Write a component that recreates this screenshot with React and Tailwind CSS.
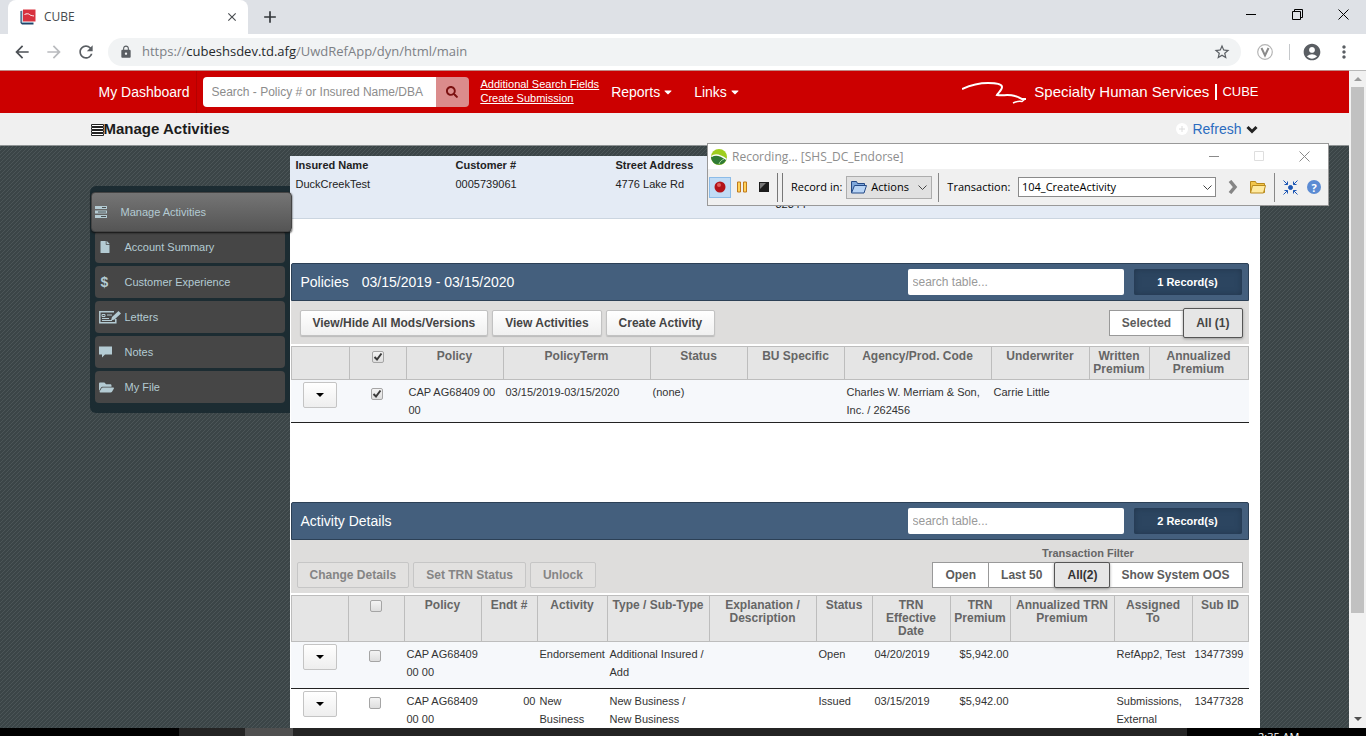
import React from "react";
import { MdArrowBack, MdArrowForward, MdRefresh, MdLock, MdStarBorder, MdAccountCircle, MdMoreVert, MdClose, MdAdd } from "react-icons/md";
import { FaSearch, FaCaretDown, FaFile, FaFolderOpen } from "react-icons/fa";

const stripes = "bg-[linear-gradient(135deg,#4b5557_0%,#4b5557_13%,#3b4547_13%,#3b4547_50%,#4b5557_50%,#4b5557_63%,#3b4547_63%,#3b4547_100%)] bg-size-[4px_4px]";

function BrowserChrome() {
  return (
    <div className="shrink-0 font-['Open_Sans',sans-serif]">
      <div className="flex h-[34px] bg-[#dee1e6] pl-2">
        <div className="flex w-60 items-center rounded-t-lg bg-white pl-3 pr-2 text-[12px] text-[#45494d]">
          <svg className="mr-2 size-4" viewBox="0 0 16 16" aria-hidden="true">
            <path d="M.5 2v12l1.500 1.500h11.500V14H2V2z" fill="#1f4468" />
            <path d="M2 1.500v12h11.500" fill="none" stroke="#8fb0c6" />
            <path d="M3 .5h12.500V12.500H3z" fill="#d8323f" />
            <path d="M4.500 5.500c2-1 4-1 5 0s2 1 4.500 1.500" fill="none" stroke="#fff" />
          </svg>
          <span className="grow">CUBE</span>
          <button type="button" aria-label="Close tab" className="grid size-4 place-items-center text-[#4a4e52]"><MdClose size={14} /></button>
        </div>
        <button type="button" aria-label="New tab" className="ml-3 grid w-5 place-items-center text-[#33373b]"><MdAdd size={20} /></button>
        <div className="ml-auto flex w-[138px] items-center justify-around pb-[6px] text-black">
          <button type="button" aria-label="Minimize"><svg width="11" height="11" viewBox="0 0 11 11"><path d="M0 5.500h10" stroke="currentColor" /></svg></button>
          <button type="button" aria-label="Restore"><svg width="11" height="11" viewBox="0 0 11 11" fill="none" stroke="currentColor"><path d="M.5 2.500h8v8h-8zM2.500 2.500v-2h8v8h-2" /></svg></button>
          <button type="button" aria-label="Close window"><svg width="11" height="11" viewBox="0 0 11 11"><path d="M.5.5l10 10M10.500.5l-10 10" stroke="currentColor" /></svg></button>
        </div>
      </div>
      <div className="flex h-9 items-center bg-white pl-3 pr-3 text-[#5a5e63]">
        <button type="button" aria-label="Back" className="grid w-5 place-items-center text-[#4c5055]"><MdArrowBack size={20} /></button>
        <button type="button" aria-label="Forward" className="ml-3 grid w-5 place-items-center text-[#b9bbbe]"><MdArrowForward size={20} /></button>
        <button type="button" aria-label="Reload" className="ml-3 grid w-5 place-items-center"><MdRefresh size={20} /></button>
        <div className="ml-3 flex h-7 grow items-center rounded-full bg-[#f1f3f4] px-[10px]">
          <MdLock size={14} className="ml-px" />
          <div className="ml-[9px] grow text-[13px] text-[#7c8085]">https://<span className="text-[#25282b]">cubeshsdev.td.afg</span>/UwdRefApp/dyn/html/main</div>
          <button type="button" aria-label="Bookmark"><MdStarBorder size={18} /></button>
        </div>
        <svg className="ml-4 size-4" viewBox="0 0 16 16" fill="none" aria-hidden="true">
          <circle cx="8" cy="8" r="7.300" stroke="#b5b5b5" strokeWidth="1.200" />
          <path d="M4.500 4L8 11.500 11.500 4" stroke="#8b8b8b" strokeWidth="2" />
        </svg>
        <div className="ml-4 mr-3 h-4 w-px bg-[#c5c8cb]" />
        <button type="button" aria-label="Profile"><MdAccountCircle size={20} /></button>
        <button type="button" aria-label="Browser menu" className="ml-3"><MdMoreVert size={20} /></button>
      </div>
    </div>
  );
}

function NavBar() {
  return (
    <header className="h-[43px] shrink-0 border-t border-[#c08a86] bg-[#c00] text-white">
      <div className="mx-auto flex h-full w-[1170px] max-w-full items-center">
        <a href="#dashboard" className="flex h-full w-[107px] items-center border-r border-[#b50000] pl-[9px] text-[14px] whitespace-nowrap">My Dashboard</a>
        <form className="ml-[6px] flex h-[30px] w-[266px]">
          <input type="text" aria-label="Search" placeholder="Search - Policy # or Insured Name/DBA" className="w-[233px] rounded-l-sm bg-white px-[9px] text-[12px] text-[#555] placeholder:text-[#8c8c8c]" />
          <button type="button" aria-label="Run search" className="grid w-[33px] place-items-center rounded-r-sm bg-[#db8c8c] text-[#7b1010]"><FaSearch size={12} /></button>
        </form>
        <div className="ml-3 flex flex-col pb-[2px] text-[11px] leading-[14px] underline">
          <a href="#fields">Additional Search Fields</a>
          <a href="#create">Create Submission</a>
        </div>
        <button type="button" className="ml-3 flex items-center gap-[2px] text-[14px]">Reports <FaCaretDown size={12} /></button>
        <button type="button" className="ml-5 flex items-center gap-[2px] text-[14px]">Links <FaCaretDown size={12} /></button>
        <div className="ml-auto flex items-center">
          <svg className="h-6 w-16" viewBox="0 0 64 24" fill="none" stroke="#fff" aria-hidden="true">
            <path d="M0 9C9 5 16 3 26 3c8 0 14 1 14 4 0 3-4 6-5 8 6 1 11-1 18 1 4 1 4 2 7 3l4 0" strokeWidth="2" />
            <path d="M63 19l-3 2.500c-3-.5-6 0-9 1.500" strokeWidth="1.500" />
          </svg>
          <span className="ml-2 text-[15px]">Specialty Human Services</span>
          <span className="ml-[6px] h-4 w-[2px] bg-white" />
          <span className="ml-[5px] pr-px text-[13px]">CUBE</span>
        </div>
      </div>
    </header>
  );
}

function SubHeader() {
  return (
    <div className="h-[33px] shrink-0 border-b border-[#8e9394] bg-[#f0f0f0]">
      <div className="mx-auto flex h-full w-[1170px] max-w-full items-center">
        <svg className="ml-px mt-[2px] h-3 w-[13px]" viewBox="0 0 13 12" fill="#fff" stroke="#222" aria-hidden="true">
          <path d="M.5 .5h12v2H.5zM.5 3.500h12v2H.5zM.5 6.500h12v2H.5zM.5 9.500h12v2H.5z" />
        </svg>
        <h1 className="text-[15px] font-bold text-[#1c1c1c]">Manage Activities</h1>
        <div className="ml-auto flex items-center pr-[2px] text-[14px]">
          <svg className="mr-1 size-3" viewBox="0 0 12 12" aria-hidden="true"><circle cx="6" cy="6" r="6" fill="#fff" /><path d="M6 3v6M3 6h6" stroke="#dcdcdc" /></svg>
          <a href="#refresh" className="text-[#2b6cbf]">Refresh</a>
          <svg className="ml-1" width="12" height="9" viewBox="0 0 12 9" aria-hidden="true"><path d="M1.500 2L6 6.500 10.500 2" fill="none" stroke="#222" strokeWidth="3" /></svg>
        </div>
      </div>
    </div>
  );
}

function ServerIcon() {
  return (
    <svg width="12" height="12" viewBox="0 0 12 12" aria-hidden="true">
      <path d="M0 0h12v3H0zM0 4.500h12v3H0zM0 9h12v3H0z" fill="#b4cbd3" />
      <path d="M7 1.500h4M3 6h8M6 10.500h5" stroke="#4b5254" />
    </svg>
  );
}
function LetterIcon() {
  return (
    <svg width="22" height="14" viewBox="0 0 22 14" fill="none" stroke="#b4cbd3" aria-hidden="true">
      <path d="M15 1.700H.8v11h16V9" strokeWidth="1.500" />
      <path d="M3 4.500h3v2H3zM3 8.500h7M3 10.500h10M8 5h5" />
      <path d="M12 10.500l1-3.500 6.500-6 2.500 2.500-6.500 6z" fill="#b4cbd3" stroke="none" />
    </svg>
  );
}
function NoteIcon() {
  return (
    <svg width="13" height="12" viewBox="0 0 13 12" aria-hidden="true"><path d="M0 .5h13v8H6L3 11.500v-3H0z" fill="#b4cbd3" /></svg>
  );
}

const menu = [
  { name: "Account Summary", icon: <FaFile size={12} /> },
  { name: "Customer Experience", icon: <span className="pl-[2px] text-[14px] leading-4 font-bold" aria-hidden="true">$</span> },
  { name: "Letters", icon: <LetterIcon /> },
  { name: "Notes", icon: <NoteIcon /> },
  { name: "My File", icon: <FaFolderOpen size={15} /> },
];

function Sidebar() {
  return (
    <nav className="mt-10 w-[200px] shrink-0 self-start rounded-l-md bg-[#1c2c32] pb-[10px] pt-[6px] text-[11px] text-[#b4cbd3]">
      <a href="#manage" className="relative z-10 -mr-[2px] ml-px flex h-10 items-center rounded border border-[#444] bg-linear-to-b from-[#757575] to-[#555] pl-[3px] shadow-[0_1px_2px_#111]">
        <span className="w-[26px]"><ServerIcon /></span>Manage Activities
      </a>
      <ul className="flex flex-col gap-[3px]">
        {menu.map((m) => (
          <li key={m.name} className="ml-[5px] mr-[5px] first:-mt-px">
            <a href="#menu" className="flex h-8 items-center rounded bg-[#464646] pl-1">
              <span className="flex w-[26px] shrink-0 justify-start">{m.icon}</span>{m.name}
            </a>
          </li>
        ))}
      </ul>
    </nav>
  );
}

function Tick({ label, checked = false }) {
  return (
    <span className="inline-grid size-3 align-middle">
      <input type="checkbox" aria-label={label} defaultChecked={checked} className="peer col-start-1 row-start-1 size-3 appearance-none rounded-[2px] border border-[#a5a5a5] bg-linear-to-b from-[#f4f4f4] to-[#dedede]" />
      <svg className="pointer-events-none invisible col-start-1 row-start-1 size-3 peer-checked:visible" viewBox="0 0 12 12" aria-hidden="true">
        <path d="M2.500 6L5 8.500l4.500-6" fill="none" stroke="#3a3a3a" strokeWidth="2" />
      </svg>
    </span>
  );
}

function PanelHead({ title, extra, count }) {
  return (
    <div className="flex h-[38px] items-center rounded-t-xs border border-[#2c4056] bg-[#445f7d] pl-[9px] pr-[6px] text-[14px] text-white">
      <h2>{title}</h2>
      {extra && <span className="ml-[13px]">{extra}</span>}
      <input type="text" aria-label={"Search " + title} placeholder="search table..." className="ml-auto h-[26px] w-[216px] rounded-xs bg-white px-[5px] text-[12px] text-[#555] placeholder:text-[#999]" />
      <div className="ml-[10px] flex h-[26px] w-[108px] items-center justify-center rounded-xs bg-[#2c4560] text-[11px] font-bold shadow-[inset_0_0_6px_#22364c]">{count}</div>
    </div>
  );
}

const btn = "h-[26px] rounded-xs border px-3 text-[12px] font-bold whitespace-nowrap";
const btnLive = btn + " border-[#c2c2c2] bg-linear-to-b from-white to-[#f0f0f0] text-[#444] shadow-[0_1px_1px_#bbb]";
const btnDim = btn + " border-[#c6c6c6] bg-[#e2e1e0] text-[#858585]";
const seg = "h-[26px] -ml-px border border-[#999] bg-white px-3 text-[12px] font-bold text-[#5c5c5c] whitespace-nowrap";

function RowMenu() {
  return (
    <button type="button" aria-label="Row actions" className="inline-grid h-[26px] w-[34px] place-items-center rounded-xs border border-[#c4c4c4] bg-linear-to-b from-white to-[#eee] text-black">
      <svg width="8" height="4" viewBox="0 0 8 4" aria-hidden="true"><path d="M0 0h8L4 4z" fill="currentColor" /></svg>
    </button>
  );
}

const th = "border-y border-r border-[#bdbdbd] px-px pt-[3px] align-top text-[12px] leading-[13px] font-bold whitespace-pre-line text-[#666] first:border-l";
const td = "px-[2px] pt-[3px] align-top text-[11px] leading-[18px] text-[#333]";

const policyCols = [
  ["w-[59px]", ""], ["w-[57px]", "tick"], ["w-[97px]", "Policy"], ["w-[147px]", "PolicyTerm"], ["w-[97px]", "Status"], ["w-[97px]", "BU Specific"],
  ["w-[147px]", "Agency/Prod. Code"], ["w-[98px]", "Underwriter"], ["w-[60px]", "Written Premium"], ["w-[99px]", "Annualized Premium"],
];
const activityCols = [
  ["w-[58px]", ""], ["w-[56px]", "tick"], ["w-[77px]", "Policy"], ["w-[56px]", "Endt #"], ["w-[70px]", "Activity"], ["w-[102px]", "Type / Sub-Type"],
  ["w-[107px]", "Explanation / Description"], ["w-[56px]", "Status"], ["w-[78px]", "TRN Effective Date"], ["w-[60px]", "TRN Premium"],
  ["w-[104px]", "Annualized TRN Premium"], ["w-[78px]", "Assigned\nTo"], ["w-[56px]", "Sub ID"],
];
const policyRows = [
  ["CAP AG68409 00 00", "03/15/2019-03/15/2020", "(none)", "", "Charles W. Merriam & Son, Inc. / 262456", "Carrie Little", "", ""],
];
const activityRows = [
  ["CAP AG68409 00 00", "", "Endorsement", "Additional Insured / Add", "", "Open", "04/20/2019", "$5,942.00", "", "RefApp2, Test", "13477399"],
  ["CAP AG68409 00 00", "00", "New Business", "New Business / New Business", "", "Issued", "03/15/2019", "$5,942.00", "", "Submissions, External", "13477328"],
];

function Grid({ cols, rows, checked, headHeight, rowHeight, rightAligned = [] }) {
  return (
    <table className="w-full table-fixed border-separate border-spacing-0">
      <thead>
        <tr className={headHeight + " bg-[#e5e5e5]"}>
          {cols.map(([w, name], i) => (
            <th key={i} scope="col" aria-label={name ? undefined : "Actions"} className={w + " " + th}>
              {name === "tick" ? <Tick label="Select all" checked={checked} /> : name}
            </th>
          ))}
        </tr>
      </thead>
      <tbody>
        {rows.map((r, n) => (
          <tr key={n} className={rowHeight + " odd:bg-[#f6f8fb] [&>td]:border-b [&>td]:border-[#222]"}>
            <td className="text-center align-top"><RowMenu /></td>
            <td className="pr-[3px] pt-px text-center align-top"><Tick label="Select row" checked={checked} /></td>
            {r.map((c, i) => (
              <td key={i} className={td + (rightAligned.includes(i) ? " text-right" : " text-left")}>{c}</td>
            ))}
          </tr>
        ))}
      </tbody>
    </table>
  );
}

function RecorderWindow() {
  return (
    <section aria-label="Recorder" className="absolute left-[707px] top-[143px] z-20 w-[622px] border border-[#999] bg-white font-['Open_Sans',sans-serif] text-[11px] text-black">
      <div className="flex h-[25px] items-center px-[3px] text-[12px] text-[#8d8d8d]">
        <svg className="mr-[5px] size-4" viewBox="0 0 16 16" aria-hidden="true">
          <circle cx="8" cy="8" r="8" fill="#9fce1f" />
          <path d="M0 8.500C2 6 6 5.500 9 6.500c3 1 5 2 6.500 3.500A8 8 0 0 1 .3 10z" fill="#2f7a35" />
          <path d="M.5 7.500c4-3 9-1.500 15 3" stroke="#fff" strokeWidth="1.400" fill="none" />
          <path d="M8 15c1-3 3-4 5-5" stroke="#a7d59b" fill="none" />
        </svg>
        <span className="grow">Recording... [SHS_DC_Endorse]</span>
        <svg className="mr-[15px] h-[11px] w-[101px]" viewBox="0 0 101 11" fill="none" aria-hidden="true">
          <path d="M0 5.500h10" stroke="#8a8a8a" /><path d="M45.500.5h9v9h-9z" stroke="#dedede" /><path d="M90.500.5l10 10M100.500.5l-10 10" stroke="#8a8a8a" />
        </svg>
      </div>
      <div className="flex h-9 items-center bg-[#f0f0f0] pr-[7px]">
        <button type="button" aria-label="Record" className="ml-px grid h-[21px] w-[22px] place-items-center border border-[#8cbce8] bg-[#c1dcf5]"><svg width="12" height="12" viewBox="0 0 12 12"><circle cx="6" cy="6" r="5.500" fill="#b3141a" /><circle cx="5" cy="4" r="2" fill="#e0605f" /></svg></button>
        <button type="button" aria-label="Pause" className="ml-[6px]"><svg width="11" height="12" viewBox="0 0 11 12" fill="#ffd35c" stroke="#c07a1c"><path d="M.5 1h3v10h-3zM6.500 1h3v10h-3z" /></svg></button>
        <button type="button" aria-label="Stop" className="ml-[11px]"><svg width="10" height="10" viewBox="0 0 10 10"><path d="M0 0h10v10H0z" fill="#1c1c1c" /><path d="M1 1h6L1 7z" fill="#777" /></svg></button>
        <span className="ml-2 h-[29px] w-[6px] border-x border-[#777]" />
        <span className="ml-2 whitespace-nowrap">Record in:</span>
        <button type="button" className="ml-1 flex h-[23px] w-[86px] shrink-0 items-center border border-[#adadad] bg-[#e1e1e1] px-1">
          <svg className="mr-1" width="16" height="14" viewBox="0 0 16 14" fill="#7fa8dc" stroke="#254a86"><path d="M.5 12.500v-11h5l1 2h7v2" /><path d="M.5 13l3-7.500h12l-2.500 7.500z" fill="#b8d4f5" /></svg>
          <span className="grow text-left">Actions</span>
          <svg width="9" height="5" viewBox="0 0 9 5" fill="none" stroke="#444"><path d="M.5.5l4 4 4-4" /></svg>
        </button>
        <span className="ml-[6px] h-[29px] w-px bg-[#888]" />
        <label htmlFor="transaction" className="ml-2">Transaction:</label>
        <span className="ml-auto grid w-[198px] items-center">
          <select id="transaction" className="col-start-1 row-start-1 h-[20px] appearance-none border border-[#8a8a8a] bg-white px-[3px]"><option>104_CreateActivity</option></select>
          <svg className="pointer-events-none col-start-1 row-start-1 mr-1 justify-self-end" width="9" height="5" viewBox="0 0 9 5" fill="none" stroke="#444" aria-hidden="true"><path d="M.5.5l4 4 4-4" /></svg>
        </span>
        <button type="button" aria-label="Next" className="ml-3"><svg width="10" height="14" viewBox="0 0 10 14"><path d="M2 1l5 6-5 6" fill="none" stroke="#858585" strokeWidth="3.500" /></svg></button>
        <button type="button" aria-label="Open folder" className="ml-3"><svg width="16" height="14" viewBox="0 0 16 14" fill="#f3c64b" stroke="#b98a1d"><path d="M.5 12.500v-11h5l1 2h8v9z" /><path d="M.5 13l2-7.500h13l-2 7.500z" fill="#ffeaa0" /></svg></button>
        <span className="ml-2 h-[29px] w-px bg-[#888]" />
        <button type="button" aria-label="Compact" className="ml-2"><svg width="15" height="15" viewBox="0 0 15 15" fill="none" stroke="#1d57b5"><circle cx="7.500" cy="7.500" r="2" fill="#1d57b5" /><path d="M.5.5l4 4M1.500 4.500h3v-3M14.500.5l-4 4M13.500 4.500h-3v-3M.5 14.500l4-4M1.500 10.500h3v3M14.500 14.500l-4-4M13.500 10.500h-3v3" /></svg></button>
        <button type="button" aria-label="Help" className="ml-[9px] grid size-[14px] place-items-center rounded-full bg-[#5b8bd3] text-[11px] leading-none font-bold text-white">?</button>
      </div>
    </section>
  );
}

function InsuredInfo() {
  return (
    <dl className="flex h-[63px] border-b border-[#cbd5e0] bg-[#e4ebf5] pl-[6px] pt-[2px] text-[11px] text-[#222]">
      <div className="w-40"><dt className="leading-[14px] font-bold">Insured Name</dt><dd className="mt-1 leading-[16px]">DuckCreekTest</dd></div>
      <div className="w-40"><dt className="leading-[14px] font-bold">Customer #</dt><dd className="mt-1 leading-[16px]">0005739061</dd></div>
      <div className="w-40"><dt className="leading-[14px] font-bold">Street Address</dt><dd className="mt-1 leading-[16px]">4776 Lake Rd</dd></div>
      <div className="w-80 self-end pb-[6px] leading-[16px]">32344</div>
      <div className="self-end pb-[6px] leading-[16px]">--</div>
    </dl>
  );
}

export default function App() {
  return (
    <div className="relative flex h-screen flex-col overflow-hidden bg-white font-['Liberation_Sans',Arial,sans-serif]">
      <BrowserChrome />
      <div className="flex min-h-0 grow">
        <div className="flex min-w-0 grow flex-col">
          <NavBar />
          <SubHeader />
          <div className={"min-h-0 grow overflow-hidden " + stripes}>
            <div className="mx-auto flex h-full w-[1170px] max-w-full">
              <Sidebar />
              <main className="mt-[10px] min-w-0 grow bg-white">
                <InsuredInfo />
                <section className="ml-px mr-[11px] mt-11">
                  <PanelHead title="Policies" extra="03/15/2019 - 03/15/2020" count="1 Record(s)" />
                  <div className="flex h-[45px] items-center gap-1 border-b-2 border-white bg-[#dedddc] px-[6px] pl-[9px]">
                    <button type="button" className={btnLive}>View/Hide All Mods/Versions</button>
                    <button type="button" className={btnLive}>View Activities</button>
                    <button type="button" className={btnLive}>Create Activity</button>
                    <div className="ml-auto flex items-center">
                      <button type="button" className={seg}>Selected</button>
                      <button type="button" className="-ml-px h-[30px] rounded-xs border border-[#555] bg-[#e6e6e6] px-3 text-[12px] font-bold text-[#444] shadow-[0_1px_3px_#999]">All (1)</button>
                    </div>
                  </div>
                  <Grid cols={policyCols} headHeight="h-[34px]" rowHeight="h-[43px]" checked rows={policyRows} />
                </section>
                <section className="ml-px mr-[11px] mt-[79px]">
                  <PanelHead title="Activity Details" count="2 Record(s)" />
                  <div className="flex h-[55px] items-end border-b-2 border-white bg-[#dedddc] px-[6px] pb-[5px]">
                    <div className="flex gap-1">
                      <button type="button" disabled className={btnDim}>Change Details</button>
                      <button type="button" disabled className={btnDim}>Set TRN Status</button>
                      <button type="button" disabled className={btnDim}>Unlock</button>
                    </div>
                    <div className="ml-auto flex flex-col items-center">
                      <div className="text-[11px] leading-[14px] font-bold text-[#666]">Transaction Filter</div>
                      <div className="mt-[2px] flex">
                        <button type="button" className={seg}>Open</button>
                        <button type="button" className={seg}>Last 50</button>
                        <button type="button" className="relative -mx-px h-[26px] rounded-xs border border-[#555] bg-[#e6e6e6] px-3 text-[12px] font-bold text-[#333] shadow-[0_1px_3px_#999]">All(2)</button>
                        <button type="button" className={seg}>Show System OOS</button>
                      </div>
                    </div>
                  </div>
                  <Grid cols={activityCols} headHeight="h-[47px]" rowHeight="h-[47px]" rows={activityRows} rightAligned={[1, 7]} />
                </section>
              </main>
            </div>
          </div>
        </div>
        <div className="flex w-[17px] shrink-0 flex-col items-center border-t border-[#b9b9b9] bg-[#f1f1f1]" aria-hidden="true">
          <svg className="my-[6px]" width="8" height="4" viewBox="0 0 8 4"><path d="M0 4h8L4 0z" fill="#9b9b9b" /></svg>
          <div className="w-[13px] grow bg-[#c1c1c1]" />
          <svg className="mb-[7px] mt-[104px]" width="8" height="4" viewBox="0 0 8 4"><path d="M0 0h8L4 4z" fill="#505050" /></svg>
        </div>
      </div>
      <div className="flex h-2 shrink-0 items-start overflow-hidden bg-black font-['Open_Sans',sans-serif]">
        <div className="h-2 w-[179px]" />
        <div className="h-2 w-[66px] bg-[#242424]" />
        <div className="h-2 w-12 bg-[#4f4f4f]" />
        <div className="h-2 w-[894px] bg-[#242424]" />
        <div className="ml-[71px] whitespace-nowrap pt-[2px] text-[11px] leading-[14px] text-white">2:35 AM</div>
      </div>
      <RecorderWindow />
    </div>
  );
}
